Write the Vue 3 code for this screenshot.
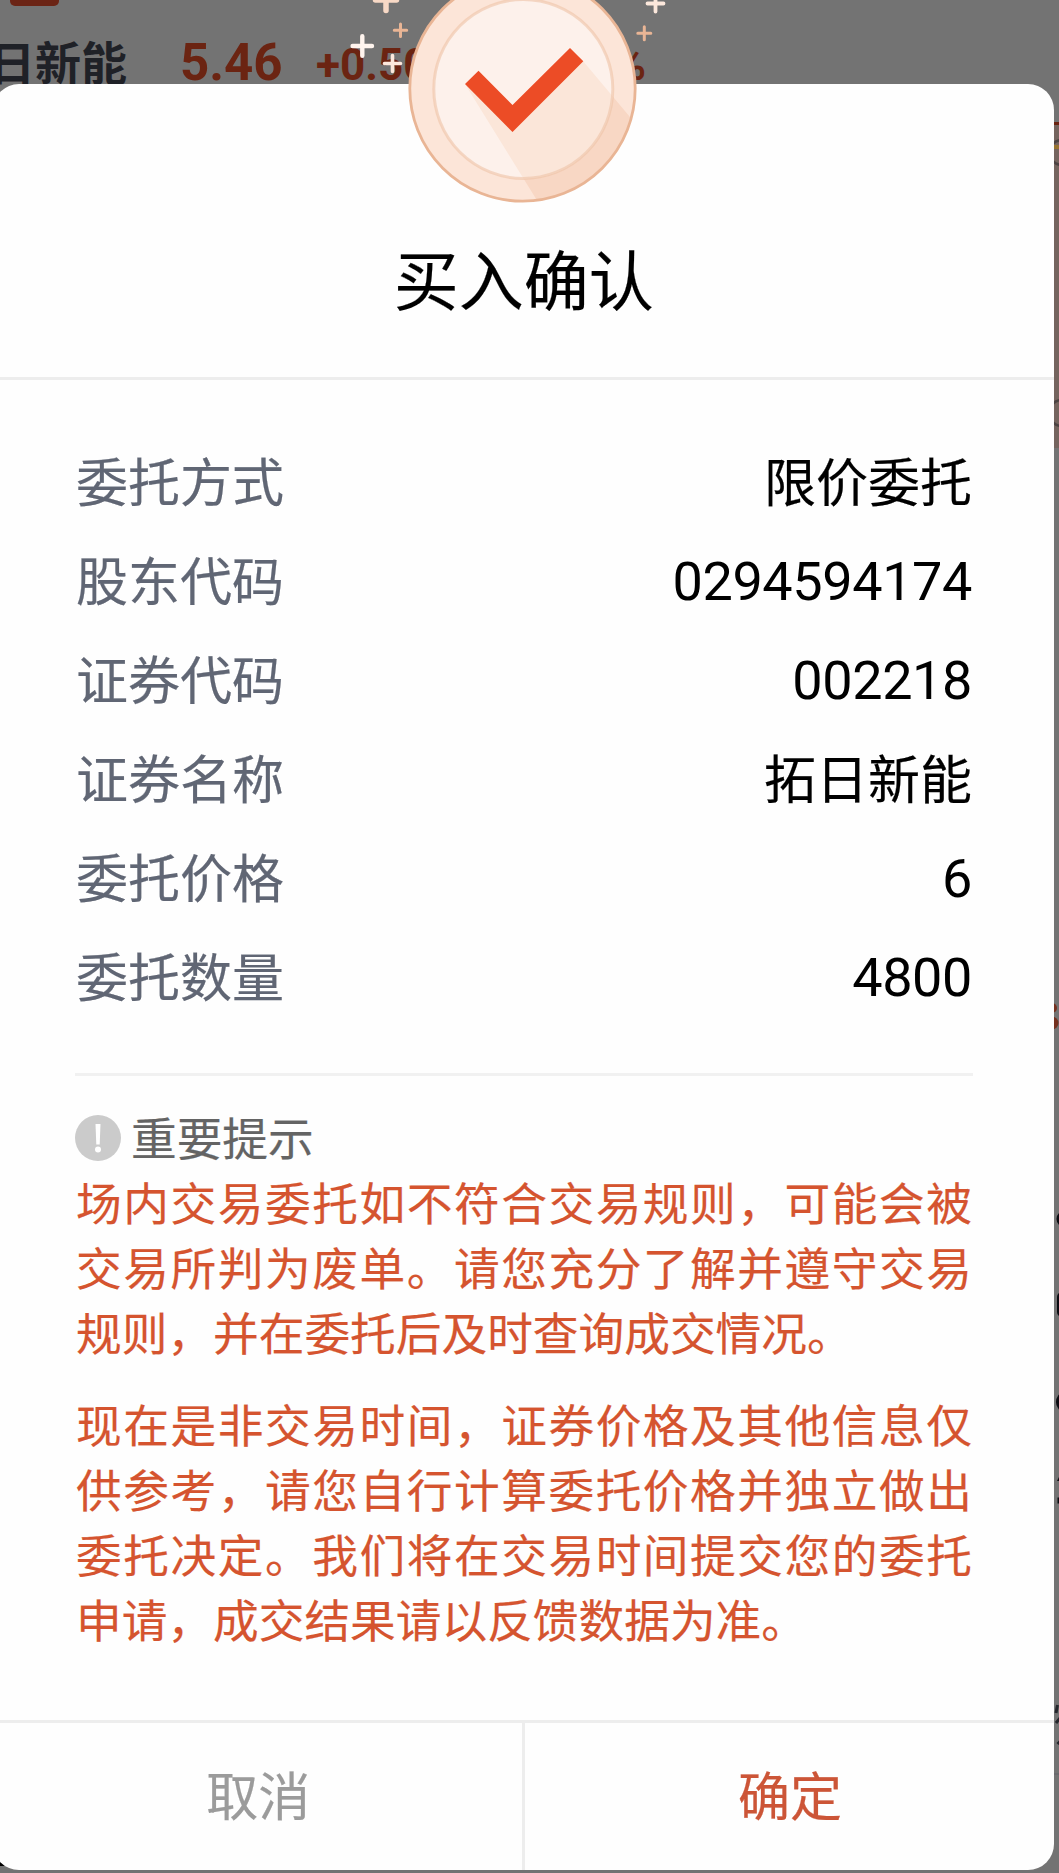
<template>
  <div class="page">
    <!-- Cotización detrás del diálogo -->
    <div class="quote">
      <span class="quote-name">日新能</span>
      <span class="quote-price">5.46</span>
      <span class="quote-change">+0.50</span>
      <span class="quote-rate">10.08%</span>
    </div>
    <span class="quote-tab"></span>
    <span class="corner"></span>

    <!-- Borde derecho visible de la página de fondo -->
    <svg class="edge" width="8" height="1873" viewBox="0 0 8 1873" fill="none">
      <rect y="122" width="8" height="326" fill="#74645e" />
      <rect y="122" width="8" height="3" fill="#6b2412" />
      <circle cx="10" cy="152.500" r="12.500" stroke="#4b4342" stroke-width="2.500" />
      <rect y="145" width="8" height="4" fill="#987330" />
      <circle cx="10" cy="413" r="13" stroke="#4b4342" stroke-width="2.500" />
      <g fill="#75301e">
        <circle cx="0" cy="1008" r="5" />
        <circle cx="0" cy="1023" r="6.500" />
      </g>
      <g fill="#0b0c12">
        <circle cx="13" cy="1219" r="8.500" />
        <rect x="5" y="1292" width="10" height="25" rx="5" />
        <ellipse cx="11" cy="1402" rx="7" ry="9" />
        <path d="M5 1481l3-6v6zM5.500 1497.500h3v6h-3z" />
      </g>
      <path d="M4 1713l1.500-8M4 1723l5-6M5.500 1744l4-4" stroke="#24262c" stroke-width="3" />
      <rect y="1773" width="8" height="2" fill="#6a6a6e" />
    </svg>

    <div class="dialog" role="dialog" aria-modal="true">
      <header class="dialog-head">
        <h1 class="dialog-title">买入确认</h1>
      </header>

      <div class="dialog-body">
        <dl class="fields">
          <div v-for="f in fields" :key="f.label" class="field">
            <dt>{{ f.label }}</dt>
            <dd :class="{ num: f.num }">{{ f.value }}</dd>
          </div>
        </dl>

        <section class="notice">
          <div class="notice-head">
            <svg width="46" height="46" viewBox="0 0 46 46">
              <circle cx="23" cy="23" r="23" fill="#cbcbcb" />
              <path d="M20.500 9h5l-.8 20.500h-3.400z" fill="#fff" />
              <circle cx="23" cy="34.500" r="3" fill="#fff" />
            </svg>
            <span>重要提示</span>
          </div>
          <p v-for="(text, i) in notices" :key="i">{{ text }}</p>
        </section>
      </div>

      <footer class="dialog-foot">
        <button class="btn cancel">取消</button>
        <button class="btn confirm">确定</button>
      </footer>
    </div>

    <!-- Medalla con el check y los destellos -->
    <svg class="badge" width="360" height="220" viewBox="340 0 360 220" fill="none">
      <defs>
        <clipPath id="ring"><circle cx="522.500" cy="88.500" r="112.500" /></clipPath>
        <clipPath id="disc"><circle cx="523.300" cy="89" r="89.500" /></clipPath>
      </defs>
      <circle cx="522.500" cy="88.500" r="112.800" fill="#fce5d8" />
      <path :d="shadow" fill="#f8d7c4" clip-path="url(#ring)" />
      <circle cx="523.300" cy="89" r="89.500" fill="#fdf1eb" />
      <path :d="shadow" fill="#fbe6d9" clip-path="url(#disc)" />
      <circle cx="523.300" cy="89" r="89.500" stroke="#efc3a6" stroke-opacity=".6" stroke-width="3" />
      <circle cx="522.500" cy="88.500" r="112.700" stroke="#e9b595" stroke-width="2.800" />
      <path d="M465 84l13.500-13.300 34 34.300L570 48l13.300 13.300L512.500 132z" fill="#ec4c26" />
      <g stroke-linecap="round">
        <path
          v-for="(s, i) in sparks"
          :key="i"
          :d="`M${s.x - s.r} ${s.y}h${s.r * 2}M${s.x} ${s.y - s.r}v${s.r * 2}`"
          :stroke="s.color"
          :stroke-width="s.w"
        />
      </g>
    </svg>
  </div>
</template>

<script setup>
const fields = [
  { label: '委托方式', value: '限价委托' },
  { label: '股东代码', value: '0294594174', num: true },
  { label: '证券代码', value: '002218', num: true },
  { label: '证券名称', value: '拓日新能' },
  { label: '委托价格', value: '6', num: true },
  { label: '委托数量', value: '4800', num: true },
]

const notices = [
  '场内交易委托如不符合交易规则，可能会被交易所判为废单。请您充分了解并遵守交易规则，并在委托后及时查询成交情况。',
  '现在是非交易时间，证券价格及其他信息仅供参考，请您自行计算委托价格并独立做出委托决定。我们将在交易时间提交您的委托申请，成交结果请以反馈数据为准。',
]

const shadow = 'M465 84L538 202L640 202L640 129L583 61L512 120z'

const sparks = [
  { x: 386, y: 0, r: 10.5, w: 5.5, color: '#f8d9c6' },
  { x: 400.5, y: 30.3, r: 6.2, w: 3, color: '#e9b595' },
  { x: 362.3, y: 46, r: 9.7, w: 4.4, color: '#fff4ee' },
  { x: 392.5, y: 63.5, r: 8, w: 3.6, color: '#fce8dc' },
  { x: 655.5, y: 3.5, r: 8, w: 3.8, color: '#fce8dc' },
  { x: 644.3, y: 33.3, r: 6.5, w: 3, color: '#e9b595' },
]
</script>

<style>
body {
  margin: 0;
  background: #737373;
}
</style>

<style scoped>
.page {
  position: relative;
  width: 1059px;
  height: 1873px;
  overflow: hidden;
  background: #737373;
  font-family: "Noto Sans CJK SC", sans-serif;
}

/* ── Fondo ── */
.quote {
  display: flex;
  align-items: baseline;
  width: 1200px;
  height: 84px;
  margin-left: -11px;
  line-height: 125px;
  color: #6b2412;
  font-family: Roboto, "Noto Sans CJK SC", sans-serif;
  font-weight: 700;
  white-space: nowrap;
}
.quote-name {
  width: 191px;
  font-size: 46px;
  color: #1f2127;
}
.quote-price { width: 136px; font-size: 51px; }
.quote-change { width: 150px; font-size: 44px; }
.quote-rate { width: 180px; font-size: 44px; text-align: right; }
.quote-tab {
  position: absolute;
  top: 0;
  left: 10px;
  width: 49px;
  height: 6px;
  border-radius: 0 0 5px 5px;
  background: #6b2415;
}
.corner {
  position: absolute;
  left: 0;
  bottom: 7px;
  width: 10px;
  height: 10px;
  background: #000;
}
.edge {
  position: absolute;
  top: 0;
  left: 1052px;
}
.badge {
  position: absolute;
  top: 0;
  left: 340px;
}

/* ── Diálogo ── */
.dialog {
  position: absolute;
  top: 84px;
  left: -7px;
  display: flex;
  flex-direction: column;
  box-sizing: border-box;
  width: 1060.5px;
  height: 1786px;
  border-radius: 26px;
  background: #fefefe;
  -webkit-text-stroke: 0.2px currentColor;
}
.dialog-head {
  display: flex;
  justify-content: center;
  box-sizing: border-box;
  height: 296px;
  padding: 143px 0 0 1px;
  border-bottom: 3px solid #ededed;
}
.dialog-title {
  margin: 0;
  font-size: 65px;
  font-weight: 400;
  line-height: 100px;
  color: #000;
}
.dialog-body {
  flex: 1;
  padding: 50px 81px 0 82px;
}
.fields {
  margin: 0;
  padding-bottom: 49px;
  border-bottom: 3px solid #f1f1f1;
}
.field {
  display: flex;
  justify-content: space-between;
  height: 99px;
  padding: 0 0.5px 0 1px;
  font-size: 52px;
  line-height: 99px;
}
.field dt { color: #606674; }
.field dd { margin: 0; color: #000; }
.field dd.num {
  padding-top: 3px;
  font-family: Roboto, sans-serif;
  font-size: 54px;
  letter-spacing: -0.4px;
  -webkit-text-stroke: 0;
}

.notice { padding-top: 29px; }
.notice-head {
  display: flex;
  align-items: center;
  gap: 10px;
  height: 63px;
  padding-top: 1px;
  font-size: 45.7px;
  line-height: 60px;
  color: #646464;
}
.notice-head span { padding-bottom: 3px; }
.notice p {
  margin: 0 0 26.5px;
  padding: 0 0.5px 0 1px;
  font-size: 45.7px;
  line-height: 65px;
  color: #d5542f;
  text-align: justify;
}

.dialog-foot {
  display: flex;
  height: 147px;
  border-top: 3px solid #ededed;
}
.btn {
  flex: 1;
  padding: 0 0 6px 2px;
  border: 0;
  background: none;
  font-family: inherit;
  font-size: 52px;
  line-height: 138px;
  -webkit-text-stroke: 0.2px currentColor;
}
.cancel {
  border-right: 3px solid #ededed;
  color: #9b9b9b;
}
.confirm { color: #cc5537; }
</style>
